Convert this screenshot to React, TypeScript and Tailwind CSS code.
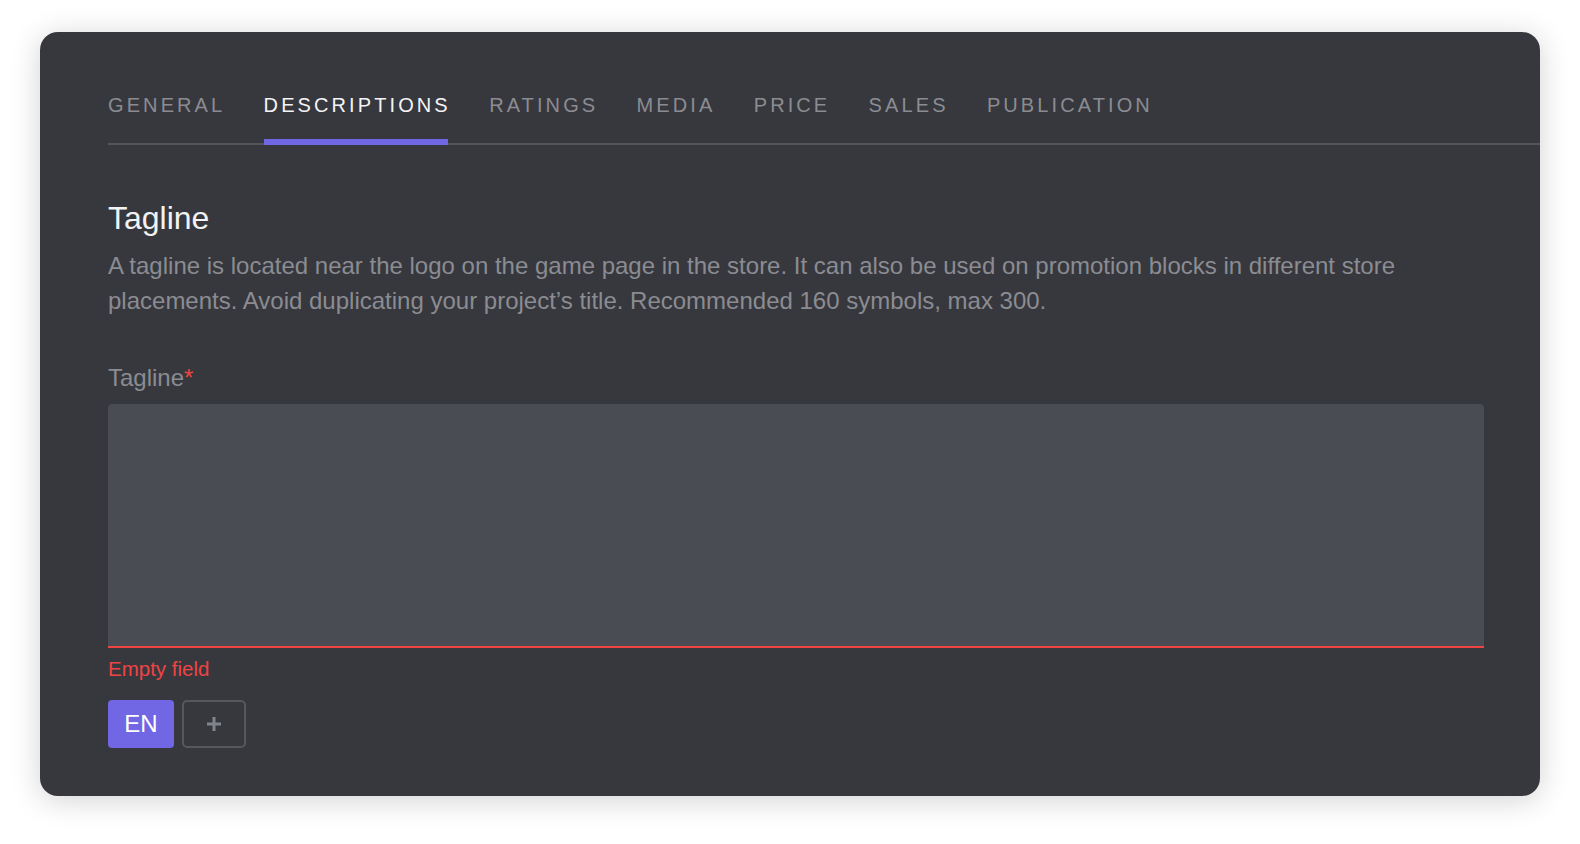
import React from "react";

const tabs = ["GENERAL", "DESCRIPTIONS", "RATINGS", "MEDIA", "PRICE", "SALES", "PUBLICATION"];

export default function App() {
  return (
    <div
      className="min-h-screen bg-white pt-8 px-10 pb-12"
      style={{ fontFamily: '"Liberation Sans", Arial, sans-serif' }}
    >
      <div className="h-[764px] rounded-[18px] bg-[#37383d] shadow-[0_4px_30px_rgba(0,0,0,0.18)] pl-[68px] pt-[61px]">
        <div className="flex gap-[38.3px] border-b-2 border-[#54555b]">
          {tabs.map((t, i) => (
            <div
              key={t}
              className={
                "relative pb-[26px] text-[20px] leading-[24px] tracking-[3.1px] " +
                (i === 1 ? "text-[#f4f4f6]" : "text-[#8b8c92]")
              }
            >
              {t}
              {i === 1 && (
                <div className="absolute left-0 right-[3px] bottom-[-2px] h-[6px] bg-[#7166e4]" />
              )}
            </div>
          ))}
        </div>

        <div className="pr-[56px]">
          <h2 className="mt-[55px] text-[32px] leading-[36px] text-[#f2f2f4]">Tagline</h2>
          <p className="mt-[12px] text-[24px] leading-[35px] text-[#8b8c92]">
            A tagline is located near the logo on the game page in the store. It can also be used on
            promotion blocks in different store placements. Avoid duplicating your project’s title.
            Recommended 160 symbols, max 300.
          </p>

          <div className="mt-[46px] text-[24px] leading-[28px] text-[#8b8c92]">
            Tagline<span className="text-[#ef4444]">*</span>
          </div>
          <div className="mt-[12px] h-[244px] rounded-t-[4px] bg-[#4a4c54] border-b-2 border-[#ef4444]" />
          <div className="mt-[8px] text-[20.5px] leading-[26px] text-[#ef4444]">Empty field</div>

          <div className="mt-[18px] flex gap-[8px]">
            <button className="w-[66px] h-[48px] rounded-[4px] bg-[#7166e4] text-white text-[24px] leading-none">
              EN
            </button>
            <button className="w-[64px] h-[48px] rounded-[5px] border-2 border-[#56575d] flex items-center justify-center">
              <svg width="16" height="16" viewBox="0 0 16 16">
                <path d="M8 1v14M1 8h14" stroke="#81838a" strokeWidth="3" />
              </svg>
            </button>
          </div>
        </div>
      </div>
    </div>
  );
}
